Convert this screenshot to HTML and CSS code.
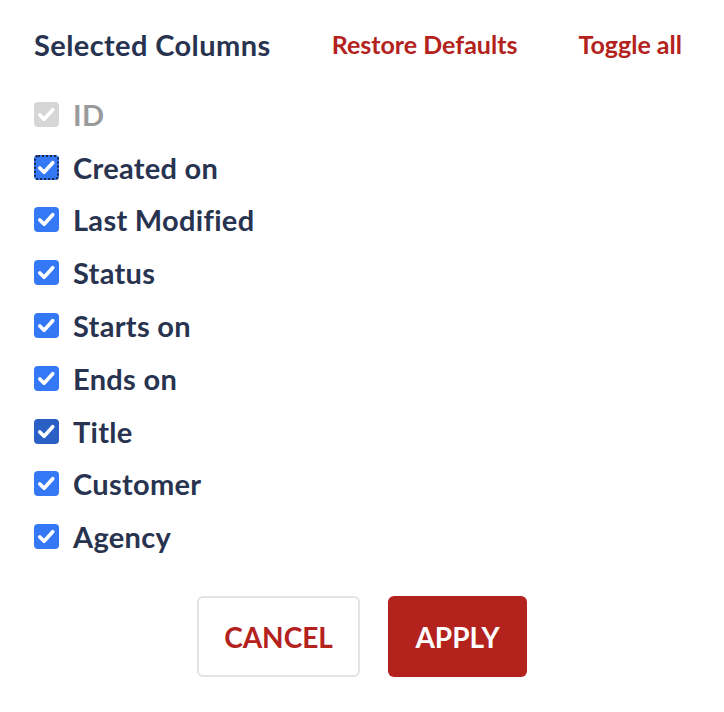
FILE: index.html
```html
<!DOCTYPE html>
<html lang="en">
<head>
  <meta charset="UTF-8" />
  <meta name="viewport" content="width=device-width, initial-scale=1.0"/>
  <title>Selected Columns</title>
  <link rel="stylesheet" href="styles.css">
</head>
<body>
  <div class="panel">
    <div class="panel-head">
      <h2>Selected Columns</h2>
      <a href="#" class="link">Restore Defaults</a>
      <a href="#" class="link">Toggle all</a>
    </div>

    <ul class="columns">
      <li class="disabled">
        <span class="box"><svg viewBox="0 0 24 24"><path d="M5 12.5l4.5 4.5 9-10"/></svg></span>
        <span class="name">ID</span>
      </li>
      <li class="focused">
        <span class="box"><svg viewBox="0 0 24 24"><path d="M5 12.5l4.5 4.5 9-10"/></svg></span>
        <span class="name">Created on</span>
      </li>
      <li>
        <span class="box"><svg viewBox="0 0 24 24"><path d="M5 12.5l4.5 4.5 9-10"/></svg></span>
        <span class="name">Last Modified</span>
      </li>
      <li>
        <span class="box"><svg viewBox="0 0 24 24"><path d="M5 12.5l4.5 4.5 9-10"/></svg></span>
        <span class="name">Status</span>
      </li>
      <li>
        <span class="box"><svg viewBox="0 0 24 24"><path d="M5 12.5l4.5 4.5 9-10"/></svg></span>
        <span class="name">Starts on</span>
      </li>
      <li>
        <span class="box"><svg viewBox="0 0 24 24"><path d="M5 12.5l4.5 4.5 9-10"/></svg></span>
        <span class="name">Ends on</span>
      </li>
      <li class="hover">
        <span class="box"><svg viewBox="0 0 24 24"><path d="M5 12.5l4.5 4.5 9-10"/></svg></span>
        <span class="name">Title</span>
      </li>
      <li>
        <span class="box"><svg viewBox="0 0 24 24"><path d="M5 12.5l4.5 4.5 9-10"/></svg></span>
        <span class="name">Customer</span>
      </li>
      <li>
        <span class="box"><svg viewBox="0 0 24 24"><path d="M5 12.5l4.5 4.5 9-10"/></svg></span>
        <span class="name">Agency</span>
      </li>
    </ul>

    <div class="actions">
      <button class="btn btn-cancel">Cancel</button>
      <button class="btn btn-apply">Apply</button>
    </div>
  </div>
</body>
</html>
```

FILE: styles.css
```css
body {
  margin: 0;
  background: #fff;
  font-family: 'Lato', 'Open Sans', sans-serif;
  color: #283350;
}

.panel {
  padding: 23px 42px 0 34px;
}

.panel-head {
  display: flex;
  align-items: center;
  justify-content: space-between;
  height: 42px;
}

.panel-head h2 {
  margin: 0;
  font-size: 29px;
  font-weight: 700;
  letter-spacing: 0.4px;
  color: #283350;
}

.link {
  color: #b3221c;
  font-size: 25px;
  font-weight: 700;
  text-decoration: none;
}

.columns {
  list-style: none;
  margin: 23px 0 0;
  padding: 0;
}

.columns li {
  display: flex;
  align-items: center;
  height: 52.8px;
}

.box {
  width: 25px;
  height: 25px;
  margin-right: 14px;
  border-radius: 4px;
  background: #3478f6;
  display: flex;
  align-items: center;
  justify-content: center;
}

.box svg {
  width: 23px;
  height: 23px;
  fill: none;
  stroke: #fff;
  stroke-width: 3.8;
  stroke-linecap: round;
  stroke-linejoin: round;
}

.name {
  font-size: 29px;
  font-weight: 700;
  letter-spacing: 0.3px;
}

.disabled .box {
  background: #d6d6d6;
}

.disabled .name {
  color: #9a9a9a;
}

.focused .box {
  outline: 2px dotted #1a2344;
  outline-offset: -2px;
}

.hover .box {
  background: #2a5fc6;
}

.actions {
  display: flex;
  justify-content: center;
  gap: 28px;
  margin: 33px -42px 0 -34px;
}

.btn {
  height: 81px;
  border-radius: 6px;
  font-family: 'Lato', 'Open Sans', sans-serif;
  font-size: 28px;
  font-weight: 700;
  text-transform: uppercase;
  cursor: pointer;
}

.btn-cancel {
  width: 163px;
  background: #fff;
  color: #b3221c;
  border: 2px solid #e4e4e4;
}

.btn-apply {
  width: 139px;
  background: #b3221c;
  color: #fff;
  border: none;
}
```
